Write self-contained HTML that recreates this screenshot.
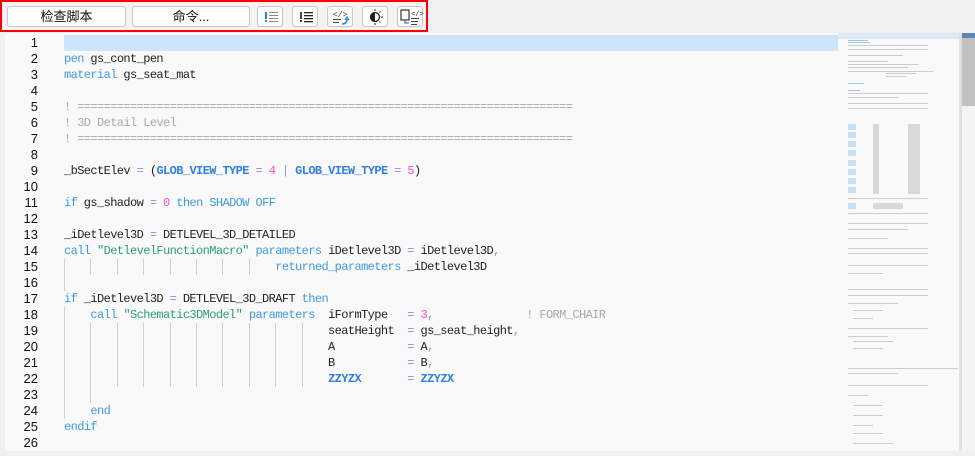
<!DOCTYPE html>
<html><head><meta charset="utf-8"><style>
*{margin:0;padding:0;box-sizing:border-box}
body{width:975px;height:451px;overflow:hidden;background:#f0f0f0;font-family:"Liberation Sans","Noto Sans CJK SC",sans-serif;position:relative}
.tb{position:absolute;left:0;top:0;width:428px;height:32px;border:2px solid #f00;background:#f3f3f3}
.btn{position:absolute;top:4px;height:21px;background:#fdfdfd;border:1px solid #c8c8c8;border-radius:3px;font-size:13px;color:#111;text-align:center;line-height:19px}
.ib{position:absolute;top:4px;width:26px;height:21px;background:#fdfdfd;border:1px solid #c8c8c8;border-radius:3px}
.ib svg{position:absolute;left:0;top:0}
.ed{position:absolute;left:5px;top:33px;width:956px;height:418px;background:#f9f9f9}
.hl{position:absolute;left:64px;top:35px;width:774px;height:16px;background:#cce5fb}
.gut{position:absolute;left:0;top:35px;width:38px;text-align:right;font-family:"Liberation Sans",sans-serif;font-size:13px;color:#111;line-height:16px}
.code{position:absolute;left:64px;top:35px;font-family:"Liberation Mono",monospace;font-size:12px;letter-spacing:-0.6px;line-height:16px;color:#222;white-space:pre}
.k{color:#3d9ae0}.c{color:#ff48d8}.o{color:#9b87d6}.cm{color:#a8a8a8}.s{color:#2aa070}.b{color:#2f80e0;font-weight:bold}
.g{position:absolute;width:1px;background:#cfcfcf}
.mm{position:absolute;left:838px;top:33px;width:123px;height:418px;background:#f9f9f9}
.sb{position:absolute;left:961px;top:33px;width:14px;height:418px;background:#f4f4f4;border-left:1px solid #ddd}
</style></head><body>
<div class="tb">
<div class="btn" style="left:5px;width:119px">检查脚本</div>
<div class="btn" style="left:130px;width:118px">命令...</div>
<div class="ib" style="left:255px"><svg width="26" height="21"><rect x="7" y="5" width="2" height="7" fill="#2f7fe0"/><rect x="7" y="13" width="2" height="2" fill="#2f7fe0"/><g fill="#888"><rect x="11" y="5" width="9" height="1"/><rect x="11" y="8" width="9" height="1"/><rect x="11" y="11" width="9" height="1"/><rect x="11" y="14" width="9" height="1"/></g></svg></div>
<div class="ib" style="left:290px"><svg width="26" height="21"><rect x="7" y="5" width="2" height="7" fill="#444"/><rect x="7" y="13" width="2" height="2" fill="#444"/><g fill="#222"><rect x="11" y="5" width="9" height="1.3"/><rect x="11" y="8" width="9" height="1.3"/><rect x="11" y="11" width="9" height="1.3"/><rect x="11" y="14" width="9" height="1.3"/></g></svg></div>
<div class="ib" style="left:325px"><svg width="26" height="21"><text x="5" y="10" font-size="8" font-family="Liberation Mono" fill="#333">&lt;/&gt;</text><g fill="#444"><rect x="5" y="12" width="8" height="1"/><rect x="5" y="15" width="6" height="1"/></g><path d="M14 17 Q19 17 19 12" stroke="#2f7fe0" fill="none" stroke-width="1.5"/><path d="M17 13 L19 10 L21 13" stroke="#2f7fe0" fill="none" stroke-width="1.3"/></svg></div>
<div class="ib" style="left:360px"><svg width="26" height="21"><circle cx="12" cy="10" r="4.5" fill="none" stroke="#222" stroke-width="1.3"/><path d="M12 5.5 A4.5 4.5 0 0 0 12 14.5Z" fill="#222"/><g stroke="#222" stroke-width="1"><line x1="12" y1="2" x2="12" y2="4"/><line x1="12" y1="16" x2="12" y2="18"/><line x1="18" y1="10" x2="20" y2="10"/><line x1="16.5" y1="5.5" x2="17.5" y2="4.5"/><line x1="16.5" y1="14.5" x2="17.5" y2="15.5"/></g></svg></div>
<div class="ib" style="left:395px"><svg width="26" height="21"><rect x="3" y="3" width="8" height="10" fill="none" stroke="#333" stroke-width="1.2"/><path d="M7 13 L7 16 L11 16" stroke="#2f7fe0" fill="none" stroke-width="1.3"/><text x="13" y="9" font-size="7" font-family="Liberation Mono" fill="#333">&lt;/&gt;</text><g fill="#444"><rect x="13" y="11" width="8" height="1"/><rect x="13" y="14" width="7" height="1"/><rect x="13" y="17" width="6" height="1"/></g></svg></div>
</div>
<div class="ed"></div>
<div class="hl"></div>
<div class="gut">1<br>2<br>3<br>4<br>5<br>6<br>7<br>8<br>9<br>10<br>11<br>12<br>13<br>14<br>15<br>16<br>17<br>18<br>19<br>20<br>21<br>22<br>23<br>24<br>25<br>26</div>
<div class="g" style="left:64px;top:259px;height:16px"></div>
<div class="g" style="left:90px;top:259px;height:16px"></div>
<div class="g" style="left:117px;top:259px;height:16px"></div>
<div class="g" style="left:143px;top:259px;height:16px"></div>
<div class="g" style="left:170px;top:259px;height:16px"></div>
<div class="g" style="left:196px;top:259px;height:16px"></div>
<div class="g" style="left:222px;top:259px;height:16px"></div>
<div class="g" style="left:249px;top:259px;height:16px"></div>
<div class="g" style="left:64px;top:275px;height:16px"></div>
<div class="g" style="left:64px;top:307px;height:112px"></div>
<div class="g" style="left:90px;top:323px;height:80px"></div>
<div class="g" style="left:117px;top:323px;height:64px"></div>
<div class="g" style="left:143px;top:323px;height:64px"></div>
<div class="g" style="left:170px;top:323px;height:64px"></div>
<div class="g" style="left:196px;top:323px;height:64px"></div>
<div class="g" style="left:222px;top:323px;height:64px"></div>
<div class="g" style="left:249px;top:323px;height:64px"></div>
<div class="g" style="left:275px;top:323px;height:64px"></div>
<div class="g" style="left:302px;top:323px;height:64px"></div>
<div class="code">
<span class="k">pen</span> gs_cont_pen
<span class="k">material</span> gs_seat_mat

<span class="cm">! ===========================================================================</span>
<span class="cm">! 3D Detail Level</span>
<span class="cm">! ===========================================================================</span>

_bSectElev <span class="o">=</span> (<span class="b">GLOB_VIEW_TYPE</span> <span class="o">=</span> <span class="c">4</span> <span class="o">|</span> <span class="b">GLOB_VIEW_TYPE</span> <span class="o">=</span> <span class="c">5</span>)

<span class="k">if</span> gs_shadow <span class="o">=</span> <span class="c">0</span> <span class="k">then</span> <span class="k">SHADOW OFF</span>

_iDetlevel3D <span class="o">=</span> DETLEVEL_3D_DETAILED
<span class="k">call</span> <span class="s">"DetlevelFunctionMacro"</span> <span class="k">parameters</span> iDetlevel3D <span class="o">=</span> iDetlevel3D<span class="o">,</span>
                                <span class="k">returned_parameters</span> _iDetlevel3D

<span class="k">if</span> _iDetlevel3D <span class="o">=</span> DETLEVEL_3D_DRAFT <span class="k">then</span>
    <span class="k">call</span> <span class="s">"Schematic3DModel"</span> <span class="k">parameters</span>  iFormType   <span class="o">=</span> <span class="c">3</span><span class="o">,</span>              <span class="cm">! FORM_CHAIR</span>
                                        seatHeight  <span class="o">=</span> gs_seat_height<span class="o">,</span>
                                        A           <span class="o">=</span> A<span class="o">,</span>
                                        B           <span class="o">=</span> B<span class="o">,</span>
                                        <span class="b">ZZYZX</span>       <span class="o">=</span> <span class="b">ZZYZX</span>

    <span class="k">end</span>
<span class="k">endif</span>
</div>
<div class="mm"><svg width="123" height="418">
<rect x="0" y="0" width="123" height="6" fill="#dde9f5"/>
<g fill="#9fc7ea"><rect x="10" y="7" width="20" height="1"/><rect x="10" y="9" width="22" height="1"/><rect x="10" y="50" width="16" height="1"/><rect x="10" y="57" width="12" height="1"/></g>
<g fill="#ccc">
<rect x="10" y="12" width="80" height="1"/><rect x="10" y="16" width="80" height="1"/><rect x="10" y="22" width="55" height="1"/><rect x="10" y="28" width="40" height="1"/><rect x="10" y="31" width="70" height="1"/><rect x="10" y="34" width="60" height="1"/><rect x="10" y="38" width="85" height="1"/><rect x="48" y="40" width="30" height="1"/><rect x="48" y="43" width="20" height="1"/><rect x="10" y="60" width="80" height="1"/><rect x="10" y="64" width="50" height="1"/><rect x="10" y="70" width="80" height="1"/><rect x="10" y="75" width="80" height="1"/>
</g>
<g fill="#c9dff2"><rect x="10" y="91" width="8" height="6"/><rect x="10" y="99" width="8" height="6"/><rect x="10" y="108" width="8" height="6"/><rect x="10" y="117" width="8" height="6"/><rect x="10" y="127" width="8" height="6"/><rect x="10" y="136" width="8" height="6"/><rect x="10" y="145" width="8" height="6"/><rect x="10" y="154" width="8" height="6"/><rect x="10" y="170" width="8" height="6"/></g>
<g fill="#d8d8d8"><rect x="35" y="91" width="6" height="70"/><rect x="70" y="91" width="12" height="70"/><rect x="35" y="170" width="30" height="6"/></g>
<g fill="#ccc"><rect x="10" y="165" width="80" height="1"/><rect x="10" y="180" width="80" height="1"/><rect x="10" y="190" width="80" height="1"/><rect x="10" y="196" width="60" height="1"/><rect x="10" y="205" width="40" height="1"/><rect x="10" y="215" width="80" height="1"/><rect x="10" y="220" width="80" height="1"/><rect x="10" y="232" width="80" height="1"/><rect x="10" y="240" width="35" height="1"/><rect x="10" y="256" width="80" height="1"/><rect x="10" y="262" width="80" height="1"/><rect x="10" y="270" width="50" height="1"/><rect x="15" y="277" width="30" height="1"/><rect x="15" y="285" width="20" height="1"/><rect x="10" y="295" width="80" height="1"/><rect x="10" y="303" width="40" height="1"/><rect x="15" y="308" width="40" height="1"/><rect x="15" y="315" width="30" height="1"/><rect x="10" y="335" width="110" height="1"/><rect x="10" y="340" width="50" height="1"/><rect x="10" y="352" width="80" height="1"/><rect x="10" y="362" width="20" height="1"/><rect x="15" y="372" width="30" height="1"/><rect x="15" y="382" width="30" height="1"/><rect x="15" y="392" width="20" height="1"/><rect x="15" y="400" width="30" height="1"/><rect x="15" y="410" width="40" height="1"/></g>
<rect x="121" y="0" width="2" height="418" fill="#e2e2e2"/>
</svg></div>
<div class="sb"><div style="position:absolute;left:0;top:0;width:14px;height:5px;background:#5a88b8"></div><div style="position:absolute;left:0;top:5px;width:14px;height:68px;background:#c1c1c1"></div></div>
</body></html>
